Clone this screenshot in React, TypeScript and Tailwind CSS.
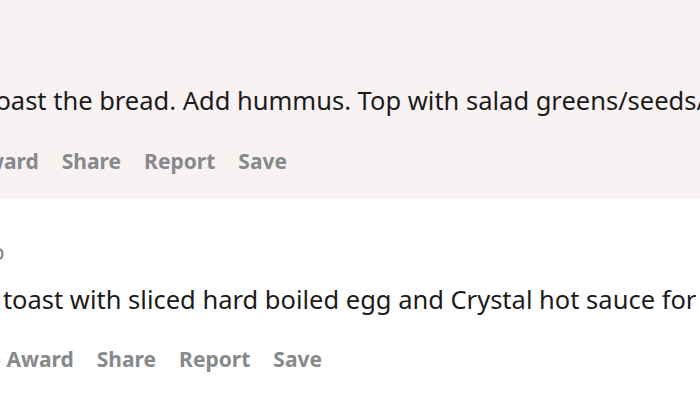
import React from 'react';

const actions = ['Give Award', 'Share', 'Report', 'Save'];

function ActionRow({ offset }: { offset: string }) {
  return (
    <div className={`flex items-center gap-[23px] whitespace-nowrap text-[21px] font-bold leading-6 text-[#878a8c] ${offset}`}>
      {actions.map((a) => (
        <span key={a}>{a}</span>
      ))}
    </div>
  );
}

export default function App() {
  return (
    <div
      className="h-[394px] w-[700px] overflow-hidden bg-white"
      style={{ fontFamily: '"Noto Sans", "Open Sans", Arial, sans-serif' }}
    >
      {/* parent comment, highlighted */}
      <div className="h-[199px] bg-[#f8f2f2] pt-[82px]">
        <p className="ml-[-17px] whitespace-nowrap text-[25.5px] leading-9 text-[#1c1c1c]">
          Toast the bread. Add hummus. Top with salad greens/seeds/nuts and a drizzle of olive oil.
        </p>
        <div className="mt-[31px]">
          <ActionRow offset="ml-[-80px]" />
        </div>
      </div>

      {/* reply */}
      <div className="pt-[41px]">
        <div className="ml-[-14px] whitespace-nowrap text-[21px] leading-6 text-[#7c7c7c]">
          ·o
        </div>
        <p className="mt-[17px] ml-[-47px] whitespace-nowrap text-[25.5px] leading-9 text-[#1c1c1c]">
          Rye toast with sliced hard boiled egg and Crystal hot sauce for breakfast.
        </p>
        <div className="mt-[30px]">
          <ActionRow offset="ml-[-45px]" />
        </div>
      </div>
    </div>
  );
}
